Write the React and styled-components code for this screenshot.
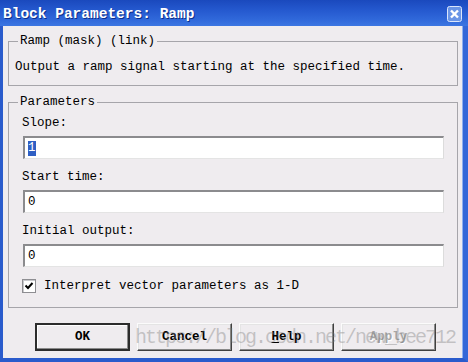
import React from "react";
import styled, { createGlobalStyle, css } from "styled-components";

const GlobalStyle = createGlobalStyle`
  html, body {
    margin: 0;
    padding: 0;
    background: #fff;
    overflow: hidden;
  }
  body {
    font-family: "Liberation Mono", "DejaVu Sans Mono", monospace;
  }
`;

const Window = styled.div`
  width: 468px;
  height: 362px;
  display: flex;
  flex-direction: column;
`;

const TitleBar = styled.div`
  height: 26px;
  flex: none;
  display: flex;
  align-items: center;
  justify-content: space-between;
  padding: 0 6px 0 3px;
  background: linear-gradient(to bottom, #1a49bd 0%, #2559cf 40%, #3068da 75%, #3c76e2 100%);
`;

const Title = styled.div`
  color: #fff;
  font-family: "Liberation Mono", monospace;
  font-weight: bold;
  font-size: 14.5px;
  line-height: 16px;
  margin-top: 2px;
  text-shadow: 1px 1px 0 #0c2f8c;
`;

const CloseBox = styled.svg`
  display: block;
  margin-top: 2px;
`;

const Frame = styled.div`
  flex: 1;
  position: relative;
  display: flex;
  flex-direction: column;
  background: #efecef;
  border-left: 3px solid #2a5bcc;
  border-right: 5px solid #3367d8;
  border-bottom: 4px solid #2a5bcc;
  box-shadow: inset -1px 0 0 #8fb0ee;
  padding: 8px 5px 0 5px;
`;

const GroupBox = styled.fieldset`
  margin: 0;
  min-width: 0;
  border: 1px solid #a6a5aa;
  padding: ${(p) => p.$pad};
  ${(p) =>
    p.$gap &&
    css`
      margin-top: ${p.$gap}px;
    `}
`;

const Legend = styled.legend`
  padding: 0 2px;
  margin-left: ${(p) => p.$shift}px;
  font-size: 12.5px;
  line-height: 14px;
  color: #000;
`;

const Text = styled.div`
  font-size: 12.5px;
  line-height: 16px;
  color: #000;
  white-space: nowrap;
`;

const Field = styled.div`
  display: flex;
  flex-direction: column;
  margin-bottom: 10px;
`;

const Label = styled(Text)`
  margin-bottom: 5px;
`;

const TextBox = styled.div`
  height: 23px;
  margin-left: 1px;
  box-sizing: border-box;
  background: #fff;
  border-top: 2px solid #8b8b8e;
  border-left: 2px solid #8b8b8e;
  border-right: 1px solid #dcdcdc;
  border-bottom: 1px solid #e4e4e4;
  padding: 0 3px;
  display: flex;
  align-items: center;
  font-size: 12.5px;
  color: #000;
`;

const Selected = styled.span`
  background: #2f5fc4;
  color: #fff;
  line-height: 15px;
`;

const CheckRow = styled.div`
  display: flex;
  align-items: center;
  gap: 8px;
  height: 18px;
`;

const CheckBox = styled.span`
  width: 14px;
  height: 14px;
  box-sizing: border-box;
  background: #fff;
  border: 1px solid #8e8e92;
  box-shadow: inset 1px 1px 0 #c8c8cc;
  display: flex;
  align-items: center;
  justify-content: center;
`;

const ButtonRow = styled.div`
  display: flex;
  gap: 7px;
  margin-top: 15px;
  padding-left: 27px;
`;

const Button = styled.button`
  width: 95px;
  height: 28px;
  box-sizing: border-box;
  padding: 0;
  background: #efecef;
  font-family: "Liberation Mono", monospace;
  font-weight: bold;
  font-size: 12.5px;
  color: #000;
  border: 1px solid;
  border-color: #fbfbfb #404040 #404040 #fbfbfb;
  box-shadow: inset -1px -1px 0 #8a8a8a, inset 1px 1px 0 #e4e4e4;
  ${(p) =>
    p.$default &&
    css`
      border: 2px solid #2c2c2c;
      box-shadow: inset -1px -1px 0 #8a8a8a, inset 1px 1px 0 #fff;
    `}
  &:disabled {
    color: #a6a6a6;
    text-shadow: 1px 1px 0 #fff;
  }
  u {
    text-decoration: underline;
    text-underline-offset: 2px;
  }
`;

const Watermark = styled.div`
  position: absolute;
  left: 132px;
  top: 301px;
  font-family: "Liberation Mono", monospace;
  font-size: 20px;
  line-height: 22px;
  letter-spacing: -2px;
  color: rgba(120, 120, 120, 0.38);
  pointer-events: none;
  white-space: nowrap;
`;

const fields = [
  { label: "Slope:", value: "1", selected: true },
  { label: "Start time:", value: "0" },
  { label: "Initial output:", value: "0" },
];

export default function App() {
  return (
    <Window>
      <GlobalStyle />
      <TitleBar>
        <Title>Block Parameters: Ramp</Title>
        <CloseBox width="15" height="16" viewBox="0 0 15 16">
          <rect x="0.5" y="0.5" width="14" height="15" rx="2" fill="#6a95e6" stroke="#dbe6fb" />
          <path d="M4 4.5 L11 11.5 M11 4.5 L4 11.5" stroke="#fff" strokeWidth="2.4" />
        </CloseBox>
      </TitleBar>
      <Frame>
        <GroupBox $pad="11px 6px 10px 6px">
          <Legend $shift={3}>Ramp (mask) (link)</Legend>
          <Text>Output a ramp signal starting at the specified time.</Text>
        </GroupBox>
        <GroupBox $gap={9} $pad="6px 13px 12px 13px">
          <Legend $shift={-4}>Parameters</Legend>
          {fields.map((f) => (
            <Field key={f.label}>
              <Label>{f.label}</Label>
              <TextBox>{f.selected ? <Selected>{f.value}</Selected> : f.value}</TextBox>
            </Field>
          ))}
          <CheckRow>
            <CheckBox>
              <svg width="10" height="10" viewBox="0 0 10 10">
                <path d="M1.5 4.5 L4 7 L8.5 2" fill="none" stroke="#000" strokeWidth="2" />
              </svg>
            </CheckBox>
            <Text>Interpret vector parameters as 1-D</Text>
          </CheckRow>
        </GroupBox>
        <ButtonRow>
          <Button $default>OK</Button>
          <Button>Cancel</Button>
          <Button>
            <u>H</u>elp
          </Button>
          <Button disabled>Apply</Button>
        </ButtonRow>
        <Watermark>https://blog.csdn.net/new_bee712</Watermark>
      </Frame>
    </Window>
  );
}
